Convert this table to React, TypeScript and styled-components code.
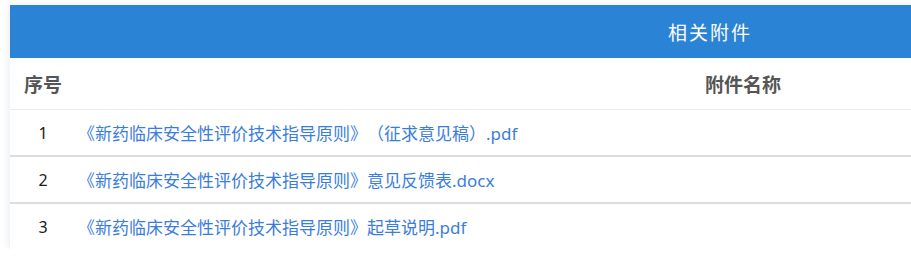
import React from "react";
import styled, { createGlobalStyle } from "styled-components";

const Global = createGlobalStyle`
  html, body { margin: 0; padding: 0; overflow: hidden; background: #ffffff; }
  body { font-family: "Noto Sans", "Noto Sans CJK SC", sans-serif; text-spacing-trim: space-all; }
`;

const Page = styled.div`
  padding: 5px 0 0 10px;
  width: 1420px;
`;

const Card = styled.section`
  width: 1400px;
  background: #ffffff;
  box-shadow: 0 1px 8px rgba(40, 80, 140, 0.14);
`;

const Title = styled.h2`
  margin: 0;
  height: 53px;
  display: flex;
  align-items: center;
  justify-content: center;
  background: #2b83d6;
  color: #ffffff;
  font-size: 19px;
  font-weight: 400;
  letter-spacing: 2px;
`;

const Row = styled.div<{ $head?: boolean; $last?: boolean }>`
  display: grid;
  grid-template-columns: 66px 1fr;
  align-items: center;
  height: ${(p) => (p.$head ? "51px" : "45px")};
  border-bottom: ${(p) =>
    p.$head ? "1px solid #ebebeb" : p.$last ? "none" : "2px solid #dddddd"};
`;

const HeadCell = styled.div`
  font-size: 19px;
  font-weight: 700;
  color: #555555;
  text-align: center;
`;

const NumCell = styled.div`
  font-size: 16px;
  color: #1a1a1a;
  text-align: center;
`;

const LinkCell = styled.a`
  padding-left: 2px;
  font-size: 17px;
  color: #3b7ddb;
  text-decoration: none;
  white-space: nowrap;
  text-spacing-trim: space-all;
`;

const files = [
  "《新药临床安全性评价技术指导原则》（征求意见稿）.pdf",
  "《新药临床安全性评价技术指导原则》意见反馈表.docx",
  "《新药临床安全性评价技术指导原则》起草说明.pdf",
];

export default function App() {
  return (
    <>
      <Global />
      <Page>
        <Card>
          <Title>相关附件</Title>
          <Row $head>
            <HeadCell>序号</HeadCell>
            <HeadCell>附件名称</HeadCell>
          </Row>
          {files.map((f, i) => (
            <Row key={f} $last={i === files.length - 1}>
              <NumCell>{i + 1}</NumCell>
              <LinkCell href="#">{f}</LinkCell>
            </Row>
          ))}
        </Card>
      </Page>
    </>
  );
}
